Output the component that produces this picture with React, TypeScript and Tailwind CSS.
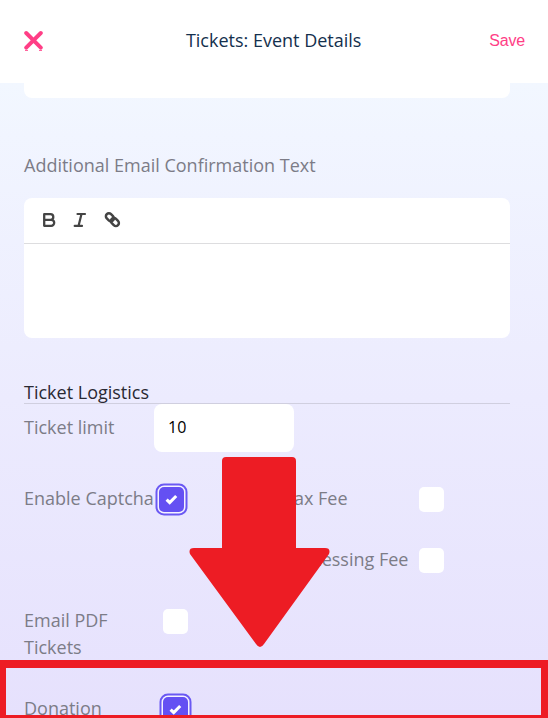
import type { ReactNode } from "react"

const Checkbox = ({ checked = false }: { checked?: boolean }) => (
  <div
    className={`flex h-[25px] w-[25px] shrink-0 items-center justify-center rounded-[5px] ${
      checked
        ? "bg-[#6450f3] shadow-[0_0_0_1.5px_#f4f2ff,0_0_0_3.5px_#6a58f3]"
        : "bg-white"
    }`}
  >
    {checked && (
      <svg width="13" height="11" viewBox="0 0 13 11" fill="none">
        <path d="M1.6 5.6 L4.7 8.5 L11.2 2" stroke="#fff" strokeWidth="3.1" />
      </svg>
    )}
  </div>
)

const Label = ({ children }: { children: ReactNode }) => (
  <div className="whitespace-nowrap text-[#7c7c87]">{children}</div>
)

const Header = () => (
  <header className="flex h-[83px] shrink-0 items-center justify-between bg-white pr-[23px] pb-[2px] pl-6">
    <svg width="19" height="21" viewBox="0 0 19 21" fill="none" stroke="#ff3e86">
      <path d="M2.2 3 L16.8 17.6 M16.8 3 L2.2 17.6" strokeWidth="3.9" strokeLinecap="round" />
      <path d="M1 20.4 H4 M15 20.4 H18" strokeWidth="0.9" />
    </svg>
    <h1 className="ml-[15px] text-[18px] text-[#14304d]">Tickets: Event Details</h1>
    <button className="font-['Liberation_Sans',sans-serif] text-base tracking-[-0.2px] text-[#ff3e86]">Save</button>
  </header>
)

const Editor = () => (
  <div className="mt-[19px] h-[140px] rounded-lg bg-white">
    <div className="flex h-[46px] items-center gap-[17px] border-b border-[#dddddf] pb-px pl-[18px] text-[#444]">
      <svg width="14" height="16" viewBox="0 0 14 16" fill="none" stroke="currentColor" strokeWidth="2.3">
        <path d="M2.2 2.2 H8.5 A2.8 2.8 0 0 1 8.5 7.8 H2.2 Z M2.2 7.8 H9.2 A3 3 0 0 1 9.2 13.8 H2.2 Z" strokeLinejoin="round" />
      </svg>
      <svg width="14" height="16" viewBox="0 0 14 16" fill="none" stroke="currentColor" strokeWidth="2.2">
        <path d="M4.5 2 H12 M1.7 13.9 H9 M8.5 2 L5.5 14" strokeLinecap="round" />
      </svg>
      <svg width="17" height="16" viewBox="0 0 17 16" fill="none" stroke="currentColor" strokeWidth="2.5">
        <rect x="1.5" y="2.3" width="8.8" height="6" rx="3" transform="rotate(45 5.9 5.3)" />
        <rect x="6.5" y="7.1" width="8.8" height="6" rx="3" transform="rotate(45 10.9 10.1)" />
      </svg>
    </div>
  </div>
)

const Arrow = () => (
  <svg className="absolute top-[457px] left-[189px]" width="142" height="191" viewBox="0 0 142 191">
    <path
      d="M37 0 H103 Q107 0 107 4 V91 H136 Q142 91 140 97 L75 187 Q71 193 67 187 L1 97 Q-1 91 5 91 H33 V4 Q33 0 37 0 Z"
      fill="#ed1c24"
    />
  </svg>
)

export default function App() {
  return (
    <div className="relative flex h-[718px] w-[548px] flex-col overflow-hidden bg-white font-['Open_Sans',sans-serif] text-[18px] leading-[27px]">
      <Header />

      <main className="flex-1 overflow-hidden bg-linear-to-b from-[#f2f7ff] via-[#ecebfe] to-[#e6e1fd] pr-[38px] pl-6">
        <div className="h-[15px] rounded-b-lg bg-white" />
        <div className="mt-[54px]">
          <Label>Additional Email Confirmation Text</Label>
        </div>
        <Editor />

        <h2 className="mt-[41px] h-[25px] border-b border-[#d0cfdf] text-[#292933]">Ticket Logistics</h2>
        <div className="flex h-12 items-center">
          <div className="w-[130px] pb-[2px]">
            <Label>Ticket limit</Label>
          </div>
          <div className="flex h-12 w-[140px] items-center rounded-lg bg-white pb-[2px] pl-[14px] text-base text-black">
            10
          </div>
        </div>

        <div className="mt-[33px] flex h-[61px] items-start">
          <div className="w-[135px]">
            <Label>Enable Captcha</Label>
          </div>
          <div className="pt-[2px]">
            <Checkbox checked />
          </div>
          <div className="ml-[100px] w-[135px]">
            <Label>Tax Fee</Label>
          </div>
          <div className="pt-[2px]">
            <Checkbox />
          </div>
        </div>
        <div className="flex h-[61px] items-start">
          <div className="ml-[260px] w-[135px]">
            <Label>Processing Fee</Label>
          </div>
          <div className="pt-[2px]">
            <Checkbox />
          </div>
        </div>
        <div className="flex h-[88px] items-start">
          <div className="w-[139px]">
            <Label>
              Email PDF
              <br />
              Tickets
            </Label>
          </div>
          <div className="pt-[2px]">
            <Checkbox />
          </div>
        </div>
        <div className="flex items-start">
          <div className="w-[139px]">
            <Label>Donation</Label>
          </div>
          <div className="pt-[2px]">
            <Checkbox checked />
          </div>
        </div>
      </main>

      {/* Callout pointing at the donation row */}
      <Arrow />
      <div className="absolute top-[660px] left-0 h-[58px] w-[548px] border-t-8 border-r-[7px] border-b-[3px] border-l-[6px] border-[#ed1c24]" />
    </div>
  )
}
